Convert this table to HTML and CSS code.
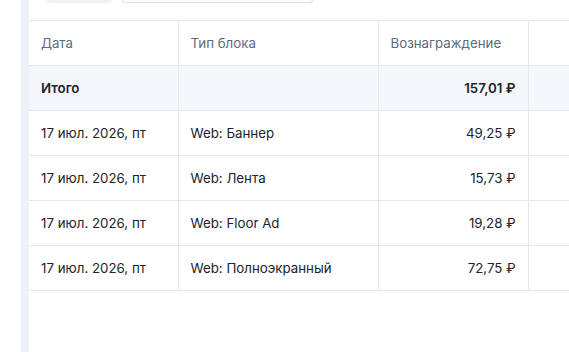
FILE: index.html
```html
<!DOCTYPE html>
<html lang="ru">
<head>
<meta charset="utf-8">
<link rel="stylesheet" href="styles.css">
</head>
<body>
<div class="page">
  <div class="rail"></div>
  <main class="panel">
    <div class="filters">
      <div class="pill pill-fill"></div>
      <div class="pill pill-outline"></div>
    </div>
    <table class="report">
      <colgroup>
        <col class="c-date"><col class="c-type"><col class="c-sum"><col class="c-rest">
      </colgroup>
      <thead>
        <tr><th>Дата</th><th>Тип блока</th><th>Вознаграждение</th><th></th></tr>
      </thead>
      <tbody>
        <tr class="total"><td>Итого</td><td></td><td class="num">157,01 ₽</td><td></td></tr>
        <tr><td>17 июл. 2026, пт</td><td>Web: Баннер</td><td class="num">49,25 ₽</td><td></td></tr>
        <tr><td>17 июл. 2026, пт</td><td>Web: Лента</td><td class="num">15,73 ₽</td><td></td></tr>
        <tr><td>17 июл. 2026, пт</td><td>Web: Floor Ad</td><td class="num">19,28 ₽</td><td></td></tr>
        <tr><td>17 июл. 2026, пт</td><td>Web: Полноэкранный</td><td class="num">72,75 ₽</td><td></td></tr>
      </tbody>
    </table>
  </main>
</div>
</body>
</html>
```

FILE: styles.css
```css
html, body {
  margin: 0;
  padding: 0;
  background: #fff;
  overflow: hidden;
}
body {
  font-family: Inter, "Noto Sans", sans-serif;
  font-size: 13.3px;
  color: #21232b;
}
.page {
  display: flex;
  height: 352px;
  padding-left: 21px;
}
.rail {
  width: 8px;
  flex: 0 0 8px;
  background: #eef1f6;
}
.panel {
  flex: 1;
  min-width: 0;
  background: #fff;
}
.filters {
  display: flex;
  height: 20px;
  padding-left: 18px;
  gap: 10px;
}
.pill {
  height: 3px;
  border-radius: 0 0 12px 12px;
}
.pill-fill {
  width: 65px;
  background: #eef1f6;
}
.pill-outline {
  width: 189px;
  height: 2px;
  border: 1px solid #dde1e9;
  border-top: none;
}
.report {
  border-collapse: collapse;
  table-layout: fixed;
  width: 560px;
}
.c-date { width: 149px; }
.c-type { width: 200px; }
.c-sum { width: 150px; }
.c-rest { width: 61px; }
.report th, .report td {
  height: 44px;
  padding: 0 12px;
  text-align: left;
  border-top: 1px solid #e5e7f0;
  border-bottom: 1px solid #e5e7f0;
  border-right: 1px solid #e5e7f0;
  white-space: nowrap;
}
.report th {
  font-weight: 400;
  color: #5e6a7e;
}
.report .num {
  text-align: right;
}
.total td {
  background: #f5f7fb;
  font-weight: 600;
}
```
